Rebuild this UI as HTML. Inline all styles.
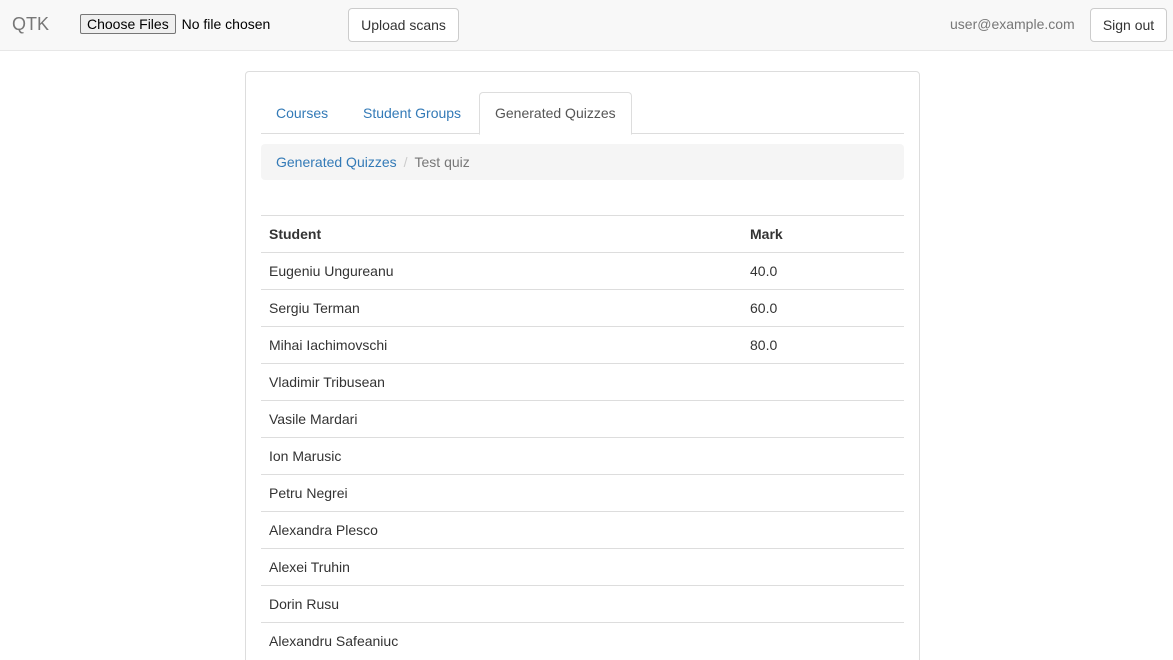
<!DOCTYPE html>
<html><head><meta charset="utf-8"><style>
*{box-sizing:border-box}
html,body{margin:0;width:1173px;height:660px;overflow:hidden}
body{font-family:"Liberation Sans",Helvetica,Arial,sans-serif;font-size:14px;color:#333;background:#fff;position:relative}
.nav{position:absolute;left:0;top:0;width:1173px;height:51px;background:#f8f8f8;border-bottom:1px solid #e7e7e7}
.brand{position:absolute;left:12px;top:14px;font-size:18px;color:#777}
.file{position:absolute;left:80px;top:14px;font-size:14px;color:#000;white-space:nowrap}
.file span.b{display:inline-block;border:1px solid #767676;background:#efefef;border-radius:2px;padding:1px 6px;font-size:14px;margin-right:2px}
.btn{position:absolute;top:8px;height:34px;border:1px solid #ccc;border-radius:4px;background:#fff;line-height:32px;color:#333;text-align:center;white-space:nowrap}
.user{position:absolute;left:950px;top:16px;color:#777}
.panel{position:absolute;left:245px;top:71px;width:675px;height:640px;border:1px solid #ddd;border-radius:4px}
.tabs{position:absolute;left:15px;top:20px;width:643px;height:42px;border-bottom:1px solid #ddd}
.tab{position:absolute;top:0;height:42px;line-height:42px;padding:0 15px;color:#337ab7}
.tab.act{background:#fff;color:#555;border:1px solid #ddd;border-bottom-color:#fff;border-radius:4px 4px 0 0;height:43px;line-height:41px}
.bc{position:absolute;left:15px;top:72px;width:643px;height:36px;background:#f5f5f5;border-radius:4px;padding:0 15px;line-height:36px}
.bc a{color:#337ab7}.bc .s{color:#ccc;padding:0 7px}.bc .c{color:#777}
table{position:absolute;left:15px;top:143px;width:643px;border-collapse:collapse}
td,th{height:37px;padding:0 8px;border-top:1px solid #ddd;text-align:left;vertical-align:middle}
th{font-weight:bold;border-bottom:1px solid #ddd}
</style></head><body>
<div class="nav">
<div class="brand">QTK</div>
<div class="file"><span class="b">Choose Files</span> No file chosen</div>
<div class="btn" style="left:348px;width:111px">Upload scans</div>
<div class="user">user@example.com</div>
<div class="btn" style="left:1090px;width:77px">Sign out</div>
</div>
<div class="panel">
<div class="tabs">
<div class="tab" style="left:0">Courses</div>
<div class="tab" style="left:87px">Student Groups</div>
<div class="tab act" style="left:218px;width:153px">Generated Quizzes</div>
</div>
<div class="bc"><a>Generated Quizzes</a><span class="s">/</span><span class="c">Test quiz</span></div>
<table>
<tr><th style="width:481px">Student</th><th>Mark</th></tr>
<tr><td>Eugeniu Ungureanu</td><td>40.0</td></tr>
<tr><td>Sergiu Terman</td><td>60.0</td></tr>
<tr><td>Mihai Iachimovschi</td><td>80.0</td></tr>
<tr><td>Vladimir Tribusean</td><td></td></tr>
<tr><td>Vasile Mardari</td><td></td></tr>
<tr><td>Ion Marusic</td><td></td></tr>
<tr><td>Petru Negrei</td><td></td></tr>
<tr><td>Alexandra Plesco</td><td></td></tr>
<tr><td>Alexei Truhin</td><td></td></tr>
<tr><td>Dorin Rusu</td><td></td></tr>
<tr><td>Alexandru Safeaniuc</td><td></td></tr>
</table>
</div>
</body></html>
